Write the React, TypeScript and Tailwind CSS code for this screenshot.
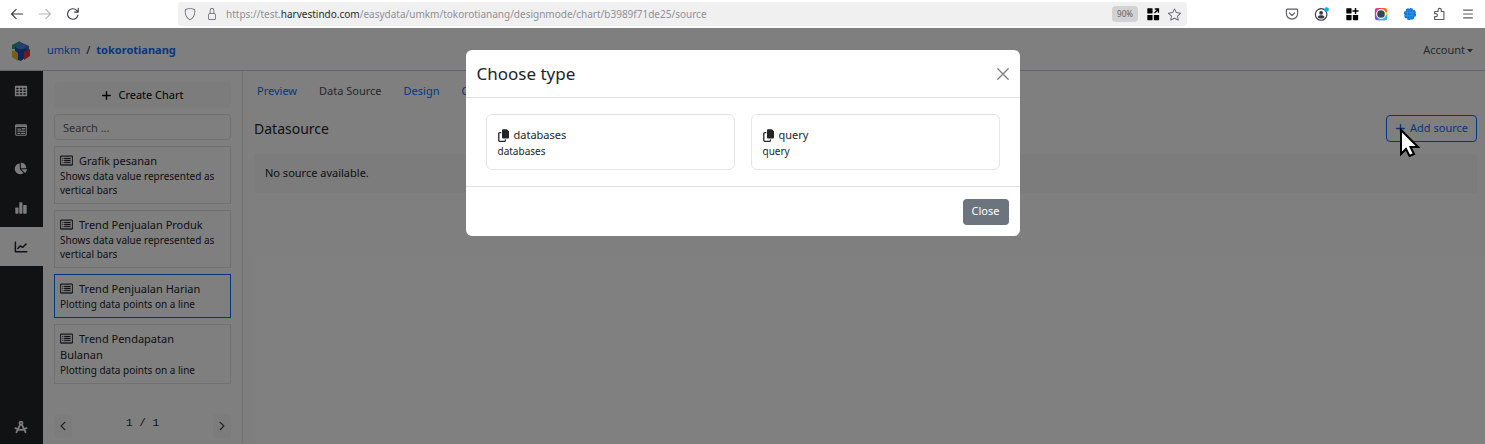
import type { ReactNode, SVGProps } from "react";
import { FaChartPie, FaPlus } from "react-icons/fa6";
import { BsCardList, BsChevronLeft, BsChevronRight, BsShield, BsLock, BsStar } from "react-icons/bs";

type IconProps = SVGProps<SVGSVGElement>;

function Svg({ children, ...props }: IconProps & { children: ReactNode }) {
  return (
    <svg viewBox="0 0 16 16" width="14" height="14" fill="none" stroke="currentColor" strokeWidth="1.3" strokeLinecap="round" strokeLinejoin="round" aria-hidden="true" {...props}>
      {children}
    </svg>
  );
}

const BackIcon = () => (
  <Svg>
    <path d="M14.5 8H2M7 2.8 1.8 8 7 13.2" />
  </Svg>
);
const ForwardIcon = () => (
  <Svg>
    <path d="M1.5 8H14M9 2.8 14.2 8 9 13.2" />
  </Svg>
);
const ReloadIcon = () => (
  <Svg>
    <path d="M13.6 9.2A6 6 0 1 1 12 3.8l1.8 1.8M14 1.6v4.2H9.8" />
  </Svg>
);
const TilesArrowIcon = () => (
  <Svg fill="currentColor" stroke="none">
    <rect x="1.5" y="1.5" width="6" height="6" rx=".6" />
    <rect x="1.5" y="9" width="6" height="6" rx=".6" />
    <rect x="9" y="9" width="6" height="6" rx=".6" />
    <path d="M10 1.5h5v5h-1.6V4.2L10.3 7.3 9.2 6.2l3.1-3.1H10z" />
  </Svg>
);
const PocketIcon = () => (
  <Svg>
    <path d="M2.6 2.5h10.8a1 1 0 0 1 1 1v4a6.4 6.4 0 0 1-12.8 0v-4a1 1 0 0 1 1-1zM5 6.8l3 2.9 3-2.9" />
  </Svg>
);
const ProfileIcon = () => (
  <Svg viewBox="0 0 18 16" width="16">
    <circle cx="8" cy="8.5" r="6.6" />
    <circle cx="8" cy="6.7" r="2.2" fill="currentColor" stroke="none" />
    <path d="M4.2 11.6c0-3 7.6-3 7.6 0-1.6 2.2-6 2.2-7.6 0z" fill="currentColor" stroke="none" />
    <circle cx="14.2" cy="2.8" r="2.6" fill="#00b3f4" stroke="none" />
  </Svg>
);
const TilesPlusIcon = () => (
  <Svg fill="currentColor" stroke="none">
    <rect x="1.5" y="1.5" width="6" height="6" rx=".6" />
    <rect x="1.5" y="9" width="6" height="6" rx=".6" />
    <rect x="9" y="9" width="6" height="6" rx=".6" />
    <path d="M11.2 1h1.6v2.7h2.7v1.6h-2.7V8h-1.6V5.3H8.5V3.7h2.7z" />
  </Svg>
);
const CameraIcon = () => (
  <Svg stroke="none">
    <defs>
      <linearGradient id="rim" x1="1" y1="0" x2="0.3" y2="1">
        <stop offset="0" stopColor="#ff9a20" />
        <stop offset=".3" stopColor="#f53d4b" />
        <stop offset=".6" stopColor="#e030c0" />
        <stop offset="1" stopColor="#7a4cf0" />
      </linearGradient>
    </defs>
    <rect x="1" y="1" width="14" height="14" rx="2.5" fill="url(#rim)" />
    <path d="M4 15 8 8l7-1v5.5a2.5 2.5 0 0 1-2.5 2.500z" fill="#20c4e0" />
    <path d="M15 5v4l-7-1z" fill="#f4d020" />
    <circle cx="8" cy="8" r="5.600" fill="#fff" />
    <circle cx="8" cy="8" r="4.400" fill="#36474f" />
  </Svg>
);
const GlobeIcon = () => (
  <Svg stroke="none">
    <circle cx="8" cy="8" r="6.100" fill="#0f74d6" />
    <circle cx="8" cy="8" r="6.200" fill="none" stroke="#0f74d6" strokeWidth="1.600" strokeDasharray="2.400 2.400" />
    <path d="M3 6h10M3 10h10M8 3v10M5.500 4c-1 3-1 5 0 8M10.500 4c1 3 1 5 0 8" stroke="#4fa5ec" strokeWidth=".6" />
    <circle cx="10" cy="7" r="1" fill="#33a852" />
  </Svg>
);
const PuzzleIcon = () => (
  <Svg>
    <path d="M3 14.300V11h1.500a1.700 1.700 0 0 0 0-3.400H3V5.200h4V3.300a1.800 1.800 0 0 1 3.600 0v1.900h3v9.100z" />
  </Svg>
);
const MenuIcon = () => (
  <Svg>
    <path d="M2.500 3.500h11M2.500 8h11M2.500 12.500h11" strokeLinecap="butt" />
  </Svg>
);

const GridIcon = () => (
  <Svg stroke="none" fill="currentColor">
    <path fillRule="evenodd" d="M2.200 2h11.600c.7 0 1.200.5 1.200 1.200v9.600c0 .7-.5 1.200-1.200 1.200H2.200C1.500 14 1 13.500 1 12.800V3.200C1 2.500 1.500 2 2.200 2zM2.600 4.200v1.800h2.600v-1.800zm4.100 0v1.800h2.600v-1.800zm4.100 0v1.800h2.600v-1.800zM2.600 7.400v1.800h2.600v-1.800zm4.100 0v1.800h2.600v-1.800zm4.100 0v1.800h2.600v-1.800zM2.600 10.600v1.800h2.600v-1.800zm4.100 0v1.800h2.600v-1.800zm4.100 0v1.800h2.600v-1.800z" />
  </Svg>
);
const FormIcon = () => (
  <Svg strokeWidth="1.200">
    <rect x="2" y="2" width="12" height="12" rx=".8" />
    <path d="M2 3.600h12" strokeWidth="2" />
    <path d="M4.500 7h3M9.500 6.600h2.500M4.500 9.300h7.500M4.500 11.800h2M8.500 11.800h3.500" strokeWidth="1.500" />
  </Svg>
);
const BarsIcon = () => (
  <Svg stroke="none" fill="currentColor">
    <rect x="1.500" y="7.500" width="3.600" height="7" rx=".8" />
    <rect x="6" y="1.500" width="3.600" height="13" rx=".8" />
    <rect x="10.500" y="4.500" width="4" height="10" rx=".8" />
  </Svg>
);
const LineIcon = () => (
  <Svg strokeWidth="1.700">
    <path d="M1.600 2.500v11h13M4.500 9.800l2.600-3.200 2.700 1.800L13.800 4.500" />
  </Svg>
);
const CompassIcon = () => (
  <Svg strokeWidth="2">
    <circle cx="8" cy="3.600" r="1.800" />
    <path d="M7 5.400 2.800 14M9 5.400l4.200 8.600M1.600 9.200c3.500 2.600 9.300 2.600 12.800 0" />
  </Svg>
);
const CopyIcon = () => (
  <Svg width="12" height="13" viewBox="0 0 12 13">
    <path d="M5 .3h3.800l2.200 2v6.200a1 1 0 0 1-1 1H5a1 1 0 0 1-1-1V1.300a1 1 0 0 1 1-1z" fill="currentColor" stroke="none" />
    <path d="M2.800 3.700H1.600a.8.800 0 0 0-.8.800v7a.8.800 0 0 0 .8.800h5a.8.800 0 0 0 .8-.8v-.7" />
  </Svg>
);
const LogoIcon = () => (
  <svg viewBox="0 0 20 22" width="20" height="22" aria-hidden="true">
    <path d="M1 5 9 1v5L5 9H1z" fill="#18a878" />
    <path d="m9 2 9 4v5l-9-1z" fill="#3b6fc0" />
    <path d="m1 10 6 3v8l-6-4z" fill="#f5b81f" />
    <path d="m4 7 5-3 7 3v9l-6 5-3-1v-7l-3-2z" fill="#1550b5" />
    <path d="m13 12 6-3v7l-6 4z" fill="#e03535" />
    <ellipse cx="10" cy="6.500" rx="5.500" ry="2.800" fill="#4d84d8" />
  </svg>
);

const navigation = [
  { label: "Tables", icon: <GridIcon /> },
  { label: "Forms", icon: <FormIcon /> },
  { label: "Pie charts", icon: <FaChartPie size={13} /> },
  { label: "Bar charts", icon: <BarsIcon /> },
  { label: "Line charts", icon: <LineIcon />, active: true },
];

const charts = [
  { name: "Grafik pesanan", text: "Shows data value represented as vertical bars" },
  { name: "Trend Penjualan Produk", text: "Shows data value represented as vertical bars" },
  { name: "Trend Penjualan Harian", text: "Plotting data points on a line", selected: true },
  { name: "Trend Pendapatan Bulanan", text: "Plotting data points on a line" },
];

function BrowserBar() {
  return (
    <div className="flex h-7 shrink-0 items-center bg-white text-[#5b5b66]">
      <div className="flex w-[178px] shrink-0 items-center gap-3.5 pl-2.5 text-[#3b3b42]">
        <button aria-label="Back"><BackIcon /></button>
        <button aria-label="Forward" className="text-[#b5b5b8]"><ForwardIcon /></button>
        <button aria-label="Reload"><ReloadIcon /></button>
      </div>
      <div className="flex h-6 w-[1009px] min-w-0 shrink items-center rounded bg-[#f0f0f1] px-1.5">
        <BsShield size={12} />
        <BsLock size={12} className="ml-2.5" />
        <p className="ml-2 min-w-0 flex-1 truncate text-[10px] text-[#8f8f96]">
          https://test.<span className="text-[#28282e]">harvestindo.com</span>/easydata/umkm/tokorotianang/designmode/chart/b3989f71de25/source
        </p>
        <button className="h-4 w-[26px] rounded-sm bg-[#d2d2d3] text-[8px]">90%</button>
        <button aria-label="Apps" className="ml-2 text-black"><TilesArrowIcon /></button>
        <button aria-label="Bookmark" className="ml-2"><BsStar size={13} /></button>
      </div>
      <div className="ml-auto flex shrink-0 items-center gap-[15px] pr-2.5">
        <button aria-label="Pocket"><PocketIcon /></button>
        <button aria-label="Profile" className="text-[#3b3b42]"><ProfileIcon /></button>
        <button aria-label="Add app" className="text-black"><TilesPlusIcon /></button>
        <button aria-label="Camera"><CameraIcon /></button>
        <button aria-label="Globe"><GlobeIcon /></button>
        <button aria-label="Extensions"><PuzzleIcon /></button>
        <button aria-label="Menu"><MenuIcon /></button>
      </div>
    </div>
  );
}

function ChartPanel() {
  return (
    <aside className="flex w-[200px] shrink-0 flex-col gap-1.5 border-r border-[#dee2e6] px-[11px] pt-[11px] pb-1.5">
      <button className="flex h-[26px] shrink-0 items-center justify-center gap-1.5 rounded bg-[#f8f9fa] text-black">
        <FaPlus size={11} />
        Create Chart
      </button>
      <input aria-label="Search charts" placeholder="Search ..." className="h-[26px] w-full shrink-0 rounded border border-[#dee2e6] px-2 placeholder:text-[#5c6066]" />
      {charts.map((chart) => (
        <a key={chart.name} href="#" className={chart.selected ? "block border border-[#0d6efd] px-[5px] py-1.5" : "block border border-[#dee2e6] px-[5px] py-1.5"}>
          <h3 className="pr-4 leading-4">
            <BsCardList size={13} strokeWidth={0.4} className="mr-1.5 inline-block align-[-2px]" />
            {chart.name}
          </h3>
          <p className="text-[10px] leading-[14px]">{chart.text}</p>
        </a>
      ))}
      <div className="mt-auto flex items-center justify-between">
        <button aria-label="Previous page" className="flex h-6 w-[18px] items-center justify-center rounded-sm bg-[#f8f9fa]"><BsChevronLeft size={10} strokeWidth={0.8} /></button>
        <span className="pb-1.5 font-['Liberation_Mono',monospace]">1 / 1</span>
        <button aria-label="Next page" className="flex h-6 w-[18px] items-center justify-center rounded-sm bg-[#f8f9fa]"><BsChevronRight size={10} strokeWidth={0.8} /></button>
      </div>
    </aside>
  );
}

function TypeCard({ name }: { name: string }) {
  return (
    <button className="flex h-14 flex-1 flex-col justify-center rounded-md border border-[#e3e6e9] px-[11px] text-left">
      <span className="flex items-center gap-1 leading-[18px]">
        <CopyIcon />
        {name}
      </span>
      <span className="text-[10px] leading-[14px]">{name}</span>
    </button>
  );
}

function TypeDialog() {
  return (
    <div role="dialog" aria-modal="true" aria-labelledby="dialog-title" className="w-[554px] rounded-md bg-white">
      <header className="flex h-12 items-center justify-between border-b border-[#dee2e6] px-[11px]">
        <h2 id="dialog-title" className="text-[17px]">Choose type</h2>
        <button aria-label="Close dialog" className="text-[#808080]">
          <Svg width="12" height="12" viewBox="0 0 12 12"><path d="M.8.800l10.400 10.400M11.200.800.800 11.200" /></Svg>
        </button>
      </header>
      <div className="flex gap-4 px-5 py-4">
        <TypeCard name="databases" />
        <TypeCard name="query" />
      </div>
      <footer className="flex h-[50px] items-center justify-end border-t border-[#dee2e6] px-[11px]">
        <button className="h-[26px] rounded bg-[#6c757d] px-[9px] text-white">Close</button>
      </footer>
    </div>
  );
}

export default function App() {
  return (
    <div className="flex min-h-screen flex-col bg-white font-['Noto_Sans',sans-serif] text-[11px] text-[#212529]">
      <BrowserBar />
      <div className="relative flex flex-1 flex-col">
        <header className="flex h-[43px] shrink-0 items-center border-b border-[#c8cbd0] pt-[3px] pr-3 pl-[11px]">
          <LogoIcon />
          <nav aria-label="Breadcrumb" className="ml-4 flex gap-1.5 text-[#0d6efd]">
            <a href="#">umkm</a>
            <span className="text-[#212529]">/</span>
            <a href="#" className="font-bold">tokorotianang</a>
          </nav>
          <button className="ml-auto flex items-center gap-0.5 text-[#4d5154]">
            Account
            <svg width="6" height="4" viewBox="0 0 6 4" fill="currentColor" aria-hidden="true"><path d="M0 0h6L3 3.500z" /></svg>
          </button>
        </header>
        <div className="flex flex-1">
          <nav aria-label="Sections" className="flex w-[43px] shrink-0 flex-col bg-[#212529] text-[#f8f9fa]">
            {navigation.map((item) => (
              <a key={item.label} href="#" aria-label={item.label} className={item.active ? "flex h-[39px] items-center justify-center bg-white pr-0.5 text-[#212529]" : "flex h-[39px] items-center justify-center pr-0.5"}>
                {item.icon}
              </a>
            ))}
            <a href="#" aria-label="Design tools" className="mt-auto flex h-[34px] items-center justify-center pr-0.5"><CompassIcon /></a>
          </nav>
          <ChartPanel />
          <main className="min-w-0 flex-1 pr-2 pl-[11px]">
            <nav aria-label="Chart" className="flex h-10 items-center gap-[22px] px-[3px] text-[#0d6efd]">
              <a href="#">Preview</a>
              <a href="#" aria-current="page" className="text-[#495057]">Data Source</a>
              <a href="#">Design</a>
              <a href="#">Options</a>
            </nav>
            <div className="mt-1 flex items-center justify-between">
              <h1 className="text-[14px]">Datasource</h1>
              <button className="flex h-[27px] items-center gap-1 rounded border border-[#0d6efd] px-2 text-[#0d6efd]">
                <FaPlus size={11} />
                Add source
              </button>
            </div>
            <p className="mt-3 flex h-[39px] items-center bg-[#f8f9fa] px-[11px]">No source available.</p>
          </main>
        </div>
        <div className="absolute inset-0 flex items-start justify-center bg-black/50 pt-[22px]">
          <TypeDialog />
        </div>
        <svg className="absolute top-[100px] right-16" width="22" height="30" viewBox="0 0 22 30" aria-hidden="true">
          <path d="M2 2v24l5-5 3.500 7 4.500-2-3.500-7H19z" fill="#fff" stroke="#000" strokeWidth="2" />
        </svg>
      </div>
    </div>
  );
}
